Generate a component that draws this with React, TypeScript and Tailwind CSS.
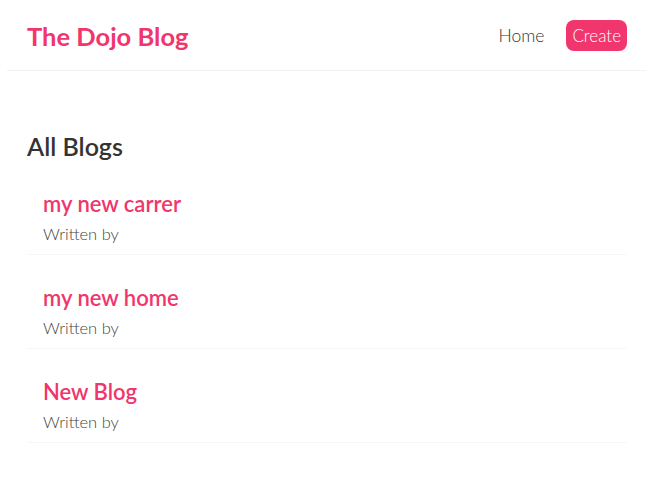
const blogs = [
  { id: 1, title: "my new carrer" },
  { id: 2, title: "my new home" },
  { id: 3, title: "New Blog" },
];

const App = () => {
  return (
    <div className="min-h-screen bg-white text-[#333] font-['Lato','Noto_Sans',sans-serif]">
      <nav className="ml-[7px] w-[640px] px-5 pt-5 pb-[19px] flex items-center border-b border-[#f2f2f2]">
        <h1 className="text-[25.5px] leading-[30px] font-bold text-[#f1356d]">The Dojo Blog</h1>
        <div className="ml-auto flex items-center">
          <a href="#" className="ml-4 p-[6px] text-[17.5px] leading-[18px] font-light text-[#333]">
            Home
          </a>
          <a
            href="#"
            className="ml-4 p-[6px] text-[17px] leading-[19px] font-light text-white bg-[#f1356d] rounded-lg"
          >
            Create
          </a>
        </div>
      </nav>
      <div className="ml-[7px] w-[640px] mt-10 p-5">
        <h2 className="text-[25px] leading-[30px] font-semibold text-[#333]">All Blogs</h2>
        <div className="flex flex-col gap-5 mt-5">
          {blogs.map((blog) => (
            <div key={blog.id} className="px-4 py-[10px] border-b border-[#f7f7f7]">
              <h2 className="text-[22px] leading-[25px] font-semibold text-[#f1356d] mb-2">{blog.title}</h2>
              <p className="text-[16.5px] leading-[20px] font-light text-[#444]">Written by</p>
            </div>
          ))}
        </div>
      </div>
    </div>
  );
};

export default App;
